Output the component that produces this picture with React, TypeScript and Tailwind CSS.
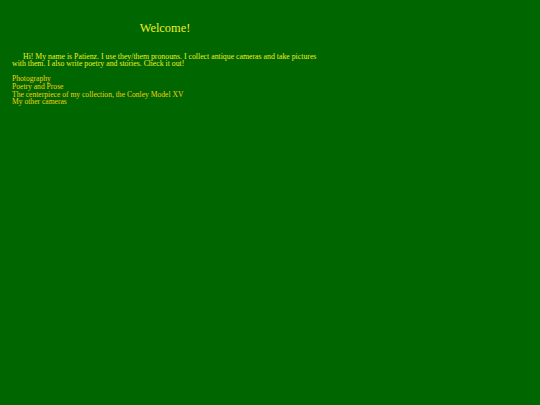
export default function App() {
  return (
    <div className="min-h-[405px] w-full bg-[#006600] font-['Liberation_Serif',serif]">
      <div className="w-[306px] ml-[12px] pt-[21px]">
        <h1 className="text-center text-[12.4px] leading-[14px] text-[#f0f020] font-normal">Welcome!</h1>
        <p className="mt-[17.5px] indent-[11px] text-[7.8px] leading-[7.7px] text-[#f0f020]">
          Hi! My name is Patienz. I use they/them pronouns. I collect antique cameras and take pictures with them. I also write poetry and stories. Check it out!
        </p>
        <div className="mt-[7.4px] flex flex-col text-[7.6px] leading-[7.65px] text-[#f5d010]">
          <a href="#">Photography</a>
          <a href="#">Poetry and Prose</a>
          <a href="#">The centerpiece of my collection, the Conley Model XV</a>
          <a href="#">My other cameras</a>
        </div>
      </div>
    </div>
  );
}
